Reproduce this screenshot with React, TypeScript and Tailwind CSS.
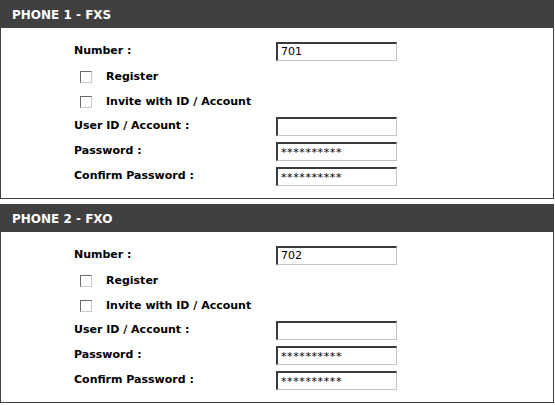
import React from 'react';

type Phone = { title: string; number: string };

const phones: Phone[] = [
  { title: "PHONE 1 - FXS", number: "701" },
  { title: "PHONE 2 - FXO", number: "702" },
];

const Field = ({ value, secret }: { value: string; secret?: boolean }) => (
  <div className={`w-[121px] h-[19px] bg-white border-t-2 border-l-2 border-t-[#3a3a3a] border-l-[#3a3a3a] border-b border-r border-b-[#c4c4c4] border-r-[#c4c4c4] flex items-center pl-[3px] text-[11px] font-normal text-black leading-none ${secret ? "tracking-[0.6px]" : ""}`}>
    {value}
  </div>
);

const Check = ({ label }: { label: string }) => (
  <div className="flex items-center h-[24px] pl-[6px]">
    <span className="w-[12px] h-[12px] bg-white border-t border-l border-t-[#6a6a6a] border-l-[#6a6a6a] border-b border-r border-b-[#c8c8c8] border-r-[#c8c8c8]" />
    <span className="ml-[14px]">{label}</span>
  </div>
);

const Row = ({ label, value, h, secret }: { label: string; value: string; h: string; secret?: boolean }) => (
  <div className={`flex items-center ${h}`}>
    <span className="w-[202px]">{label}</span>
    <Field value={value} secret={secret} />
  </div>
);

const Section = ({ phone }: { phone: Phone }) => (
  <div className="border border-[#404040] bg-white">
    <div className="h-[27px] bg-[#404040] text-white text-[12px] font-bold flex items-center pl-[11px] pt-[1px]">
      {phone.title}
    </div>
    <div className="pl-[73px] pt-[10px] pb-[9px] text-[11px] font-bold text-black">
      <Row label="Number :" value={phone.number} h="h-[26px]" />
      <div className="h-[26px] flex items-center">
        <Check label="Register" />
      </div>
      <Check label="Invite with ID / Account" />
      <Row label="User ID / Account :" value="" h="h-[25px]" />
      <Row label="Password :" value="**********" h="h-[25px]" secret />
      <Row label="Confirm Password :" value="**********" h="h-[25px]" secret />
    </div>
  </div>
);

export default function App() {
  return (
    <div className="w-[555px] h-[405px] bg-white pr-[1px] flex flex-col gap-[5px]" style={{ fontFamily: '"DejaVu Sans", Verdana, sans-serif' }}>
      {phones.map((p) => (
        <Section key={p.title} phone={p} />
      ))}
    </div>
  );
}
